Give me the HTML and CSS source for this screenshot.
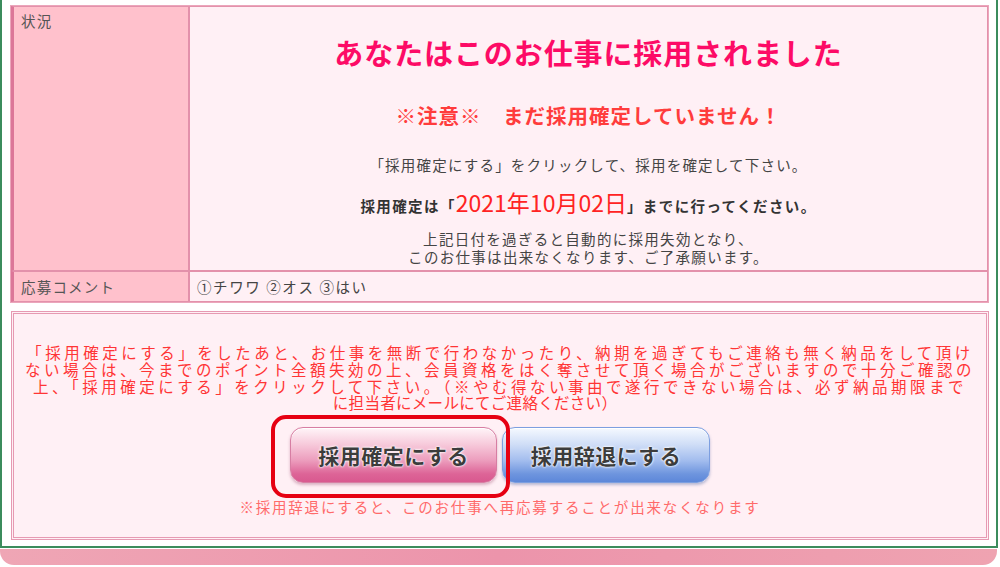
FILE: index.html
```html
<!DOCTYPE html>
<html lang="ja">
<head>
<meta charset="utf-8">
<title>採用確認</title>
<link rel="stylesheet" href="styles.css">
</head>
<body>
<div class="frame">
  <table class="info">
    <tr class="row-status">
      <th class="label">状況</th>
      <td class="value status">
        <p class="headline">あなたはこのお仕事に採用されました</p>
        <p class="caution">※注意※　まだ採用確定していません！</p>
        <p class="line1">「採用確定にする」をクリックして、採用を確定して下さい。</p>
        <p class="line2">採用確定は「<span class="date">2021年10月02日</span>」までに行ってください。</p>
        <p class="line3">上記日付を過ぎると自動的に採用失効となり、<br>このお仕事は出来なくなります、ご了承願います。</p>
      </td>
    </tr>
    <tr class="row-comment">
      <th class="label">応募コメント</th>
      <td class="value comment">①チワワ ②オス ③はい</td>
    </tr>
  </table>

  <div class="notice">
    <p class="warn">「採用確定にする」をしたあと、お仕事を無断で行わなかったり、納期を過ぎてもご連絡も無く納品をして頂けない場合は、今までのポイント全額失効の上、会員資格をはく奪させて頂く場合がございますので十分ご確認の上、「採用確定にする」をクリックして下さい。（※やむ得ない事由で遂行できない場合は、必ず納品期限まで<span class="tail">に担当者にメールにてご連絡ください）</span></p>
    <div class="actions-wrap">
      <div class="actions">
        <button class="btn btn-accept" type="button">採用確定にする</button>
        <button class="btn btn-decline" type="button">採用辞退にする</button>
        <span class="highlight"></span>
      </div>
    </div>
    <p class="note">※採用辞退にすると、このお仕事へ再応募することが出来なくなります</p>
  </div>
</div>
<div class="footer-bar"></div>
</body>
</html>
```

FILE: styles.css
```css
* { box-sizing: border-box; }

html, body {
  margin: 0;
  padding: 0;
  background: #ffffff;
}

body {
  font-family: "Noto Sans CJK JP", "Noto Sans", sans-serif;
  color: #444;
  width: 1000px;
  height: 567px;
  overflow: hidden;
}

p { margin: 0; }

.frame {
  width: 998px;
  border-left: 2px solid #3b8c5c;
  border-right: 2px solid #3b8c5c;
  border-bottom: 2px solid #3b8c5c;
  padding: 5px 7px 6px 8px;
  background: #fff;
}

.info {
  width: 979px;
  border-collapse: separate;
  border-spacing: 0;
  border: 1px solid #eba6bb;
}

.info th,
.info td {
  border: 1px solid #e391ab;
  font-size: 14.5px;
  text-align: left;
  font-weight: normal;
}

.label {
  width: 178px;
  background: #ffc1cc;
  border-left: 3px solid #dc7698 !important;
  vertical-align: top;
  color: #555;
  padding: 4px 0 0 7px;
  line-height: 20px;
  letter-spacing: 1.2px;
}

.value {
  background: #fff0f5;
}

.status {
  text-align: center !important;
  padding: 0 8px 5px;
}

.headline {
  margin-top: 27px;
  font-size: 29px;
  line-height: 36px;
  font-weight: bold;
  letter-spacing: 0.9px;
  color: #fd0b66;
}

.caution {
  margin-top: 31px;
  font-size: 20.5px;
  line-height: 28px;
  font-weight: bold;
  letter-spacing: 1px;
  color: #ff3c3c;
}

.line1 {
  margin-top: 26px;
  font-size: 14.5px;
  line-height: 20px;
  letter-spacing: 1.2px;
  color: #444;
}

.line2 {
  margin-top: 17px;
  font-size: 14.5px;
  line-height: 28px;
  height: 28px;
  font-weight: bold;
  letter-spacing: 1.4px;
  color: #333;
}

.date {
  font-size: 23px;
  line-height: 20px;
  font-weight: normal;
  color: #ff2323;
  letter-spacing: 0;
}

.line3 {
  margin-top: 10px;
  font-size: 14.5px;
  line-height: 17.5px;
  letter-spacing: 1.3px;
  color: #444;
}

.row-comment .label {
  padding-top: 0;
  line-height: 29px;
  vertical-align: middle;
}

.comment {
  padding: 0 0 0 7px;
  line-height: 29px;
  color: #444;
  letter-spacing: 1.6px;
}

.notice {
  margin: 8px 0 0 1px;
  width: 978px;
  border: 3px double #e69ab2;
  background: #fff0f5;
  padding: 30px 0 20px;
}

.warn {
  width: 951px;
  margin: 0 auto;
  font-size: 15.5px;
  line-height: 16.8px;
  letter-spacing: 3.5px;
  color: #ff3535;
  text-align: center;
}

.warn .tail {
  display: block;
  letter-spacing: 0.3px;
  padding-right: 50px;
}

.actions-wrap {
  margin-top: 16px;
  display: flex;
  justify-content: center;
}

.actions {
  position: relative;
  display: flex;
  gap: 5px;
}

.btn {
  width: 207px;
  height: 56px;
  border-radius: 13px;
  font-family: "Noto Sans CJK JP", "Noto Sans", sans-serif;
  font-size: 21px;
  font-weight: bold;
  color: #3c3c3c;
  letter-spacing: 0.5px;
  text-shadow: 0 0 3px #fff, 0 0 2px #fff, 0 0 1px #fff;
  padding: 0;
  cursor: pointer;
}

.btn-accept {
  border: 1px solid #d77ea3;
  background: linear-gradient(180deg, #fff4f8 0%, #f7cadb 30%, #ec9dbd 60%, #dd6497 85%, #d9598f 100%);
  box-shadow: 0 2px 3px rgba(150, 60, 100, 0.35), inset 0 1px 0 #fff;
}

.btn-decline {
  width: 208px;
  border: 1px solid #7d9fe0;
  background: linear-gradient(180deg, #f5f9ff 0%, #d0def7 30%, #a3bdee 60%, #6e95de 85%, #5d87d9 100%);
  box-shadow: 0 2px 3px rgba(50, 80, 150, 0.35), inset 0 1px 0 #fff;
}

.highlight {
  position: absolute;
  left: -19px;
  top: -12px;
  width: 239px;
  height: 83px;
  border: 4px solid #e60012;
  border-radius: 15px;
  pointer-events: none;
}

.note {
  margin-top: 14px;
  text-align: center;
  font-size: 14.5px;
  line-height: 20px;
  letter-spacing: 1.8px;
  color: #ff6a6a;
}

.footer-bar {
  margin-top: 1px;
  width: 997px;
  height: 16px;
  border-radius: 0 0 14px 14px;
  background: linear-gradient(90deg, #efa6b5 0%, #ec94ab 50%, #efa3b1 100%);
}
```
